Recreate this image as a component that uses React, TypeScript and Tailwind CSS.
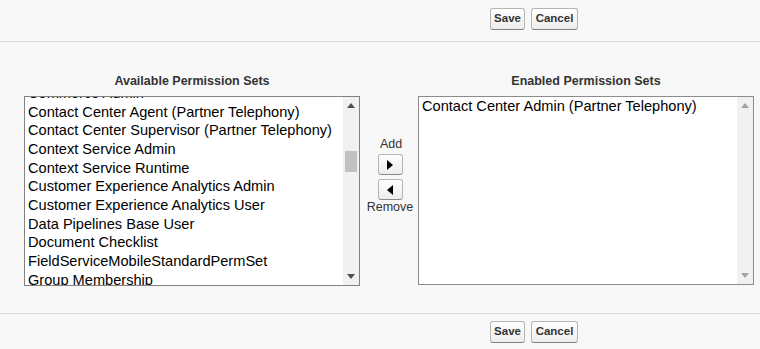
import React from "react";

const items = [
  "Commerce Admin",
  "Contact Center Agent (Partner Telephony)",
  "Contact Center Supervisor (Partner Telephony)",
  "Context Service Admin",
  "Context Service Runtime",
  "Customer Experience Analytics Admin",
  "Customer Experience Analytics User",
  "Data Pipelines Base User",
  "Document Checklist",
  "FieldServiceMobileStandardPermSet",
  "Group Membership",
  "Identity Connect",
];

function Btn({ label, w }: { label: string; w: string }) {
  return (
    <button
      className={`${w} h-[22px] rounded-[3px] border border-[#b5b5b5] border-b-[#7f7f7f] bg-gradient-to-b from-white to-[#ededed] text-[11.5px] font-bold text-[#333] leading-none`}
    >
      {label}
    </button>
  );
}

function ButtonRow() {
  return (
    <div className="flex gap-[6px] pl-[490px]">
      <Btn label="Save" w="w-[35px]" />
      <Btn label="Cancel" w="w-[47px]" />
    </div>
  );
}

function ScrollBar({ active }: { active: boolean }) {
  const arrow = active ? "#505050" : "#a3a3a3";
  return (
    <div className="w-[16px] h-full bg-[#f1f1f1] flex flex-col items-center shrink-0">
      <div className="h-[17px] w-full flex items-center justify-center">
        <svg width="8" height="5" viewBox="0 0 8 5">
          <polygon points="4,0 8,5 0,5" fill={arrow} />
        </svg>
      </div>
      <div className="flex-1 w-full px-[2px]">
        {active && <div className="mt-[37px] h-[21px] w-full bg-[#c1c1c1]" />}
      </div>
      <div className="h-[17px] w-full flex items-center justify-center">
        <svg width="8" height="5" viewBox="0 0 8 5">
          <polygon points="0,0 8,0 4,5" fill={arrow} />
        </svg>
      </div>
    </div>
  );
}

function ArrowBtn({ dir }: { dir: "right" | "left" }) {
  return (
    <button className="w-[25px] h-[21px] rounded-[3px] border border-[#b5b5b5] border-b-[#8a8a8a] bg-gradient-to-b from-white to-[#ededed] flex items-center justify-center">
      <svg width="6" height="10" viewBox="0 0 6 10">
        {dir === "right" ? (
          <polygon points="0,0 6,5 0,10" fill="#000" />
        ) : (
          <polygon points="6,0 0,5 6,10" fill="#000" />
        )}
      </svg>
    </button>
  );
}

export default function App() {
  return (
    <div className="w-[760px] h-[349px] overflow-hidden bg-[#f8f8f8] text-[#333] font-['Liberation_Sans',Arial,sans-serif]">
      <div className="h-[41px] pt-[8px]">
        <ButtonRow />
      </div>
      <div className="h-px bg-[#dddddd]" />
      <div className="h-[271px] flex pl-[24px] pt-[32px]">
        <div className="w-[336px] flex flex-col">
          <div className="h-[14px] text-[12.5px] leading-[14px] font-bold text-center text-[#333]">
            Available Permission Sets
          </div>
          <div className="mt-[8px] h-[190px] border border-[#828282] bg-white flex overflow-hidden">
            <div className="flex-1 overflow-hidden pl-[3px]">
              <div className="-mt-[13px]">
                {items.map((t) => (
                  <div key={t} className="h-[18.67px] text-[14.6px] leading-[18.67px] text-black whitespace-nowrap">
                    {t}
                  </div>
                ))}
              </div>
            </div>
            <ScrollBar active />
          </div>
        </div>
        <div className="w-[58px] flex flex-col items-center pt-[63px]">
          <div className="text-[12.5px] leading-[14px] text-[#333] ml-[4px]">Add</div>
          <div className="mt-[3px] flex flex-col gap-[4px] ml-[2px]">
            <ArrowBtn dir="right" />
            <ArrowBtn dir="left" />
          </div>
          <div className="mt-[0px] text-[12.5px] leading-[14px] text-[#333] ml-[2px]">Remove</div>
        </div>
        <div className="w-[336px] flex flex-col">
          <div className="h-[14px] text-[12.5px] leading-[14px] font-bold text-center text-[#333]">
            Enabled Permission Sets
          </div>
          <div className="mt-[8px] h-[189px] border border-[#8c8c8c] bg-white flex overflow-hidden">
            <div className="flex-1 overflow-hidden pl-[3px] pt-[0px]">
              <div className="h-[18.67px] text-[14.6px] leading-[18.67px] text-black whitespace-nowrap">
                Contact Center Admin (Partner Telephony)
              </div>
            </div>
            <ScrollBar active={false} />
          </div>
        </div>
      </div>
      <div className="h-px bg-[#dddddd]" />
      <div className="pt-[7px]">
        <ButtonRow />
      </div>
    </div>
  );
}
